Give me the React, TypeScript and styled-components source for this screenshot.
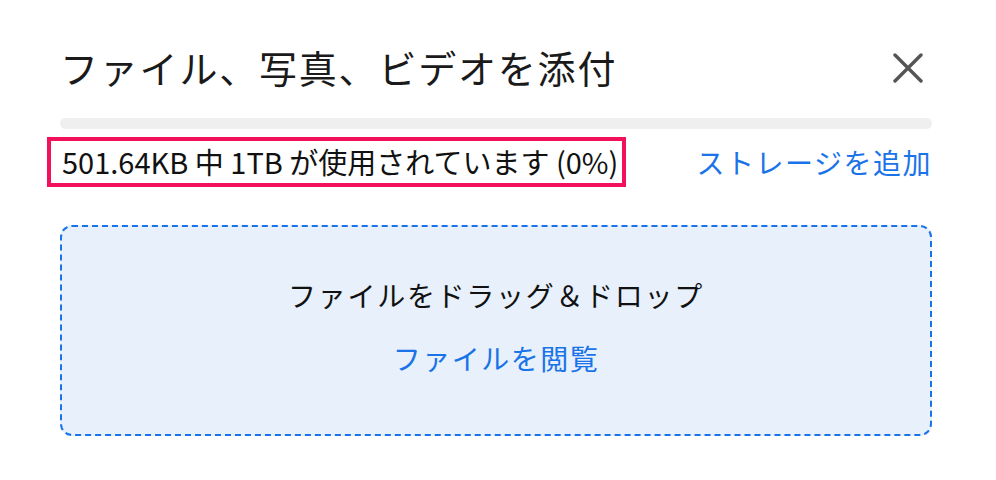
import React from "react";
import styled, { createGlobalStyle } from "styled-components";

const GlobalStyle = createGlobalStyle`
  html, body {
    margin: 0;
    padding: 0;
    background: #ffffff;
  }
  body {
    font-family: "Noto Sans CJK JP", "Noto Sans", sans-serif;
    color: #1a1a1a;
  }
`;

const Dialog = styled.div`
  width: 872px;
  padding: 35px 64px 0 60px;
  display: flex;
  flex-direction: column;
`;

const Header = styled.div`
  display: flex;
  align-items: center;
  justify-content: space-between;
  height: 62px;
`;

const Title = styled.h2`
  margin: 0;
  font-size: 38px;
  font-weight: 400;
  letter-spacing: 1.8px;
  color: #1a1a1a;
`;

const CloseButton = styled.button`
  width: 48px;
  height: 48px;
  margin-top: 4px;
  padding: 0;
  border: none;
  background: none;
  display: flex;
  align-items: center;
  justify-content: center;
  cursor: pointer;
`;

const Track = styled.div`
  margin-top: 21px;
  height: 11px;
  border-radius: 6px;
  background: #efefef;
  overflow: hidden;
`;

const Fill = styled.div`
  height: 100%;
  background: #1a73e8;
`;

const UsageRow = styled.div`
  margin-top: 8px;
  display: flex;
  align-items: center;
  justify-content: space-between;
`;

const UsageText = styled.span`
  margin-left: -13px;
  padding: 4px 4px 5px 11px;
  border: 4px solid #f2115a;
  font-size: 29px;
  line-height: 33px;
  color: #111;
`;

const Link = styled.a`
  font-size: 28px;
  line-height: 40px;
  color: #1a73e8;
  text-decoration: none;
  letter-spacing: 1.5px;
  cursor: pointer;
`;

const DropZone = styled.div`
  margin-top: 38px;
  height: 211px;
  padding-bottom: 9px;
  box-sizing: border-box;
  border: 2px dashed #1a73e8;
  border-radius: 12px;
  background: #e7f0fb;
  display: flex;
  flex-direction: column;
  align-items: center;
  justify-content: center;
  gap: 22px;
`;

const DropText = styled.div`
  font-size: 28px;
  line-height: 42px;
  letter-spacing: 1.7px;
  color: #111;
`;

const usedPercent = 0;

export default function App() {
  return (
    <>
      <GlobalStyle />
      <Dialog>
        <Header>
          <Title>ファイル、写真、ビデオを添付</Title>
          <CloseButton aria-label="閉じる">
            <svg width="30" height="30" viewBox="0 0 30 30">
              <path
                d="M2 2L28 28M28 2L2 28"
                stroke="#555"
                strokeWidth="3.4"
                strokeLinecap="round"
              />
            </svg>
          </CloseButton>
        </Header>
        <Track>
          <Fill style={{ width: `${usedPercent}%` }} />
        </Track>
        <UsageRow>
          <UsageText>501.64KB 中 1TB が使用されています (0%)</UsageText>
          <Link>ストレージを追加</Link>
        </UsageRow>
        <DropZone>
          <DropText>ファイルをドラッグ＆ドロップ</DropText>
          <Link>ファイルを閲覧</Link>
        </DropZone>
      </Dialog>
    </>
  );
}
